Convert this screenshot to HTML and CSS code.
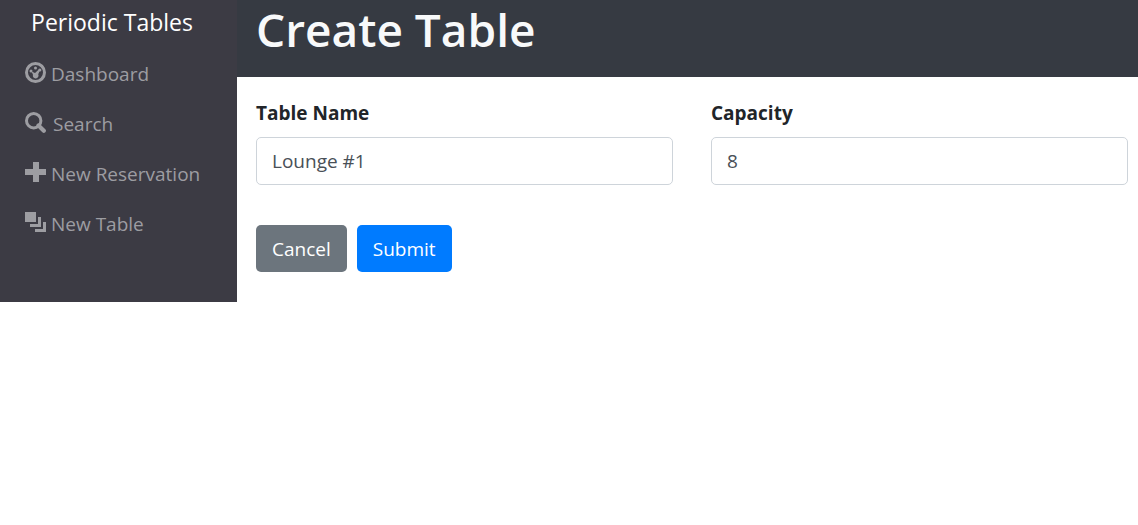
FILE: index.html
```html
<!DOCTYPE html>
<html lang="en">
<head>
<meta charset="utf-8">
<meta name="viewport" content="width=device-width, initial-scale=1">
<title>Periodic Tables</title>
<link rel="stylesheet" href="styles.css">
</head>
<body>
<div class="layout">
  <nav class="sidebar">
    <a class="brand" href="#">Periodic Tables</a>
    <ul class="menu">
      <li><a class="menu-link" href="#">
        <svg class="icon" viewBox="0 0 21 21" aria-hidden="true"><circle cx="10.5" cy="10.5" r="9" fill="none" stroke="currentColor" stroke-width="3"/><circle cx="6" cy="9" r="1.5"/><circle cx="10.5" cy="6" r="1.5"/><circle cx="14.8" cy="8" r="1.6"/><path d="M6.500 9.500l3.500 1.500 3.500-3.200 1.300 1-1.600 3.500c1 1.800-.4 4-2.400 4.100-2.200.1-3.500-1.700-2.800-3.600z"/></svg>
        <span>Dashboard</span></a></li>
      <li><a class="menu-link menu-link-wide" href="#">
        <svg class="icon" viewBox="0 0 21 21" aria-hidden="true"><circle cx="8.7" cy="8.7" r="7.2" fill="none" stroke="currentColor" stroke-width="3"/><path d="M13.5 13.5l5.300 5.200" stroke="currentColor" stroke-width="4.2" stroke-linecap="round"/></svg>
        <span>Search</span></a></li>
      <li><a class="menu-link" href="#">
        <svg class="icon" viewBox="0 0 21 21" aria-hidden="true"><path d="M8 0h6v7h7v6h-7v7H8v-7H0V7h8z"/></svg>
        <span>New Reservation</span></a></li>
      <li><a class="menu-link" href="#">
        <svg class="icon" viewBox="0 0 21 21" aria-hidden="true"><path d="M0 0h11v10H0zM13 5h3v10H5v-3h8zM18 10h3v10H10v-3h8z"/></svg>
        <span>New Table</span></a></li>
    </ul>
  </nav>
  <main class="content">
    <header class="page-header"><h1 class="page-title">Create Table</h1></header>
    <form class="form">
      <div class="fields">
        <div class="field"><label class="label" for="table-name">Table Name</label><input class="input" id="table-name" type="text" value="Lounge #1"></div>
        <div class="field"><label class="label" for="capacity">Capacity</label><input class="input" id="capacity" type="text" inputmode="numeric" value="8"></div>
      </div>
      <div class="actions">
        <button class="button button-secondary" type="button">Cancel</button>
        <button class="button button-primary" type="submit">Submit</button>
      </div>
    </form>
  </main>
</div>
</body>
</html>
```
FILE: styles.css
```css
* { box-sizing: border-box; }
body {
  margin: 0;
  background: #fff;
  color: #212529;
  font-family: "Open Sans", "Noto Sans", sans-serif;
  font-size: 19px;
  line-height: 28px;
}
.layout { display: flex; align-items: flex-start; }
.sidebar {
  flex: 0 0 237px;
  padding-bottom: 53px;
  background: #3c3b44;
}
.brand {
  display: block;
  padding: 8px 13px 9px 0;
  color: #fff;
  font-size: 23px;
  text-align: center;
  text-decoration: none;
  white-space: nowrap;
}
.menu { margin: 0; padding: 4px 0 0; list-style: none; }
.menu-link {
  display: flex;
  align-items: center;
  gap: 5px;
  height: 50px;
  padding-left: 25px;
  color: #9d9da2;
  text-decoration: none;
  white-space: nowrap;
}
.menu-link-wide { gap: 7px; }
.icon { flex: none; width: 21px; height: 21px; margin-bottom: 4px; fill: currentColor; }
.content { flex: 1; min-width: 0; }
.page-header { padding: 0 19px 19px; background: #363a42; }
.page-title {
  margin: 0;
  color: #f8f9fa;
  font-size: 46px;
  font-weight: 600;
  line-height: 58px;
}
.form { padding: 22px 10px 0 19px; }
.fields { display: grid; grid-template-columns: 1fr 1fr; gap: 38px; }
.label { display: block; margin-bottom: 10px; font-weight: 700; }
.input {
  display: block;
  width: 100%;
  height: 48px;
  padding: 0 15px;
  border: 1px solid #ced4da;
  border-radius: 5px;
  background: #fff;
  color: #495057;
  font: inherit;
}
.actions { display: flex; gap: 10px; margin-top: 40px; }
.button {
  height: 47px;
  padding: 0 16px;
  border: 0;
  border-radius: 5px;
  color: #fff;
  font: inherit;
}
.button-secondary { background: #6c757d; }
.button-primary { background: #007bff; }
```
